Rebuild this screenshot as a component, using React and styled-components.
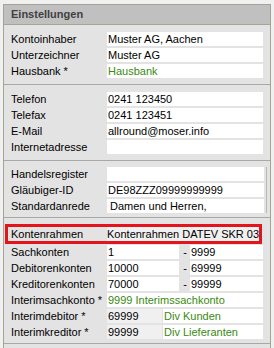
import React from "react";
import styled, { createGlobalStyle } from "styled-components";

const GlobalStyle = createGlobalStyle`
  body {
    margin: 0;
    background: #f0f0f0;
    font-family: "Liberation Sans", Arial, sans-serif;
    font-size: 11px;
  }
`;

const Panel = styled.div`
  margin: 4px 0 0 3px;
  width: 268px;
  box-sizing: border-box;
  border: 1px solid #a5a595;
  border-bottom: none;
  background: #e3e3e3;
`;

const Header = styled.div`
  height: 19px;
  line-height: 19px;
  padding-left: 7px;
  background: #c0c0c0;
  border-bottom: 1px solid #a5a595;
  font-weight: bold;
  color: #404040;
`;

const Section = styled.div`
  display: flex;
  flex-direction: column;
  gap: ${(p) => p.$gap ?? 2}px;
  padding: ${(p) => p.$pad || "7px 7px 6px 7px"};
  border-bottom: 1px solid #a8a8a8;
`;

const RuledRows = styled.div`
  display: flex;
  flex-direction: column;
  gap: 2px;
  padding-right: 2px;
  border-right: 1px solid #b8b8b8;
`;

const Row = styled.div`
  display: grid;
  grid-template-columns: 96px 1fr;
  height: 14px;
  align-items: center;
`;

const Highlight = styled.div`
  margin: 0 1px 0 -6px;
  border: 3px solid #e3141b;
  padding-left: 3px;
  display: grid;
  grid-template-columns: 96px 1fr;
  height: 14px;
  align-items: center;
`;

const Label = styled.span`
  line-height: 14px;
  color: #000;
  white-space: nowrap;
`;

const Field = styled.div`
  height: 14px;
  line-height: 14px;
  background: ${(p) => p.$bg || "#fff"};
  color: ${(p) => (p.$green ? "#3a8a10" : "#000")};
  padding-left: ${(p) => p.$indent ?? 1}px;
  white-space: nowrap;
  overflow: hidden;
`;

const Range = styled.div`
  display: grid;
  grid-template-columns: 72px 11px 1fr;
  align-items: center;
`;

const Dash = styled.span`
  text-align: right;
  padding-right: 3px;
  line-height: 14px;
`;

const Pair = styled.div`
  display: grid;
  grid-template-columns: 55px 1fr;
  gap: 1px;
`;

const Footer = styled.div`
  height: 6px;
`;

const ranges = [
  ["Sachkonten", "1", "9999"],
  ["Debitorenkonten", "10000", "69999"],
  ["Kreditorenkonten", "70000", "99999"],
];

const pairs = [
  ["Interimdebitor *", "69999", "Div Kunden"],
  ["Interimkreditor *", "99999", "Div Lieferanten"],
];

export default function App() {
  return (
    <>
      <GlobalStyle />
      <Panel>
        <Header>Einstellungen</Header>

        <Section>
          <Row>
            <Label>Kontoinhaber</Label>
            <Field>Muster AG, Aachen</Field>
          </Row>
          <Row>
            <Label>Unterzeichner</Label>
            <Field>Muster AG</Field>
          </Row>
          <Row>
            <Label>Hausbank *</Label>
            <Field $green>Hausbank</Field>
          </Row>
        </Section>

        <Section>
          <Row>
            <Label>Telefon</Label>
            <Field>0241 123450</Field>
          </Row>
          <Row>
            <Label>Telefax</Label>
            <Field>0241 123451</Field>
          </Row>
          <Row>
            <Label>E-Mail</Label>
            <Field>allround@moser.info</Field>
          </Row>
          <Row>
            <Label>Internetadresse</Label>
            <Field />
          </Row>
        </Section>

        <Section $pad="6px 3px 4px 7px">
          <RuledRows>
            <Row>
              <Label>Handelsregister</Label>
              <Field />
            </Row>
            <Row>
              <Label>Gläubiger-ID</Label>
              <Field>DE98ZZZ09999999999</Field>
            </Row>
            <Row>
              <Label>Standardanrede</Label>
              <Field $indent={3}>Damen und Herren,</Field>
            </Row>
          </RuledRows>
        </Section>

        <Section $pad="6px 7px 4px 7px" $gap={1}>
          <Highlight>
            <Label>Kontenrahmen</Label>
            <Field $bg="#f0f0f0" $indent={0}>
              Kontenrahmen DATEV SKR 03
            </Field>
          </Highlight>
          {ranges.map(([label, from, to], i) => (
            <Row key={label} style={{ marginTop: i ? 1 : 0 }}>
              <Label>{label}</Label>
              <Range>
                <Field>{from}</Field>
                <Dash>-</Dash>
                <Field>{to}</Field>
              </Range>
            </Row>
          ))}
          <Row style={{ marginTop: 1 }}>
            <Label>Interimsachkonto *</Label>
            <Field $green>9999 Interimssachkonto</Field>
          </Row>
          {pairs.map(([label, num, name]) => (
            <Row key={label} style={{ marginTop: 1 }}>
              <Label>{label}</Label>
              <Pair>
                <Field $bg="#f0f0f0">{num}</Field>
                <Field $green>{name}</Field>
              </Pair>
            </Row>
          ))}
        </Section>

        <Footer />
      </Panel>
    </>
  );
}
